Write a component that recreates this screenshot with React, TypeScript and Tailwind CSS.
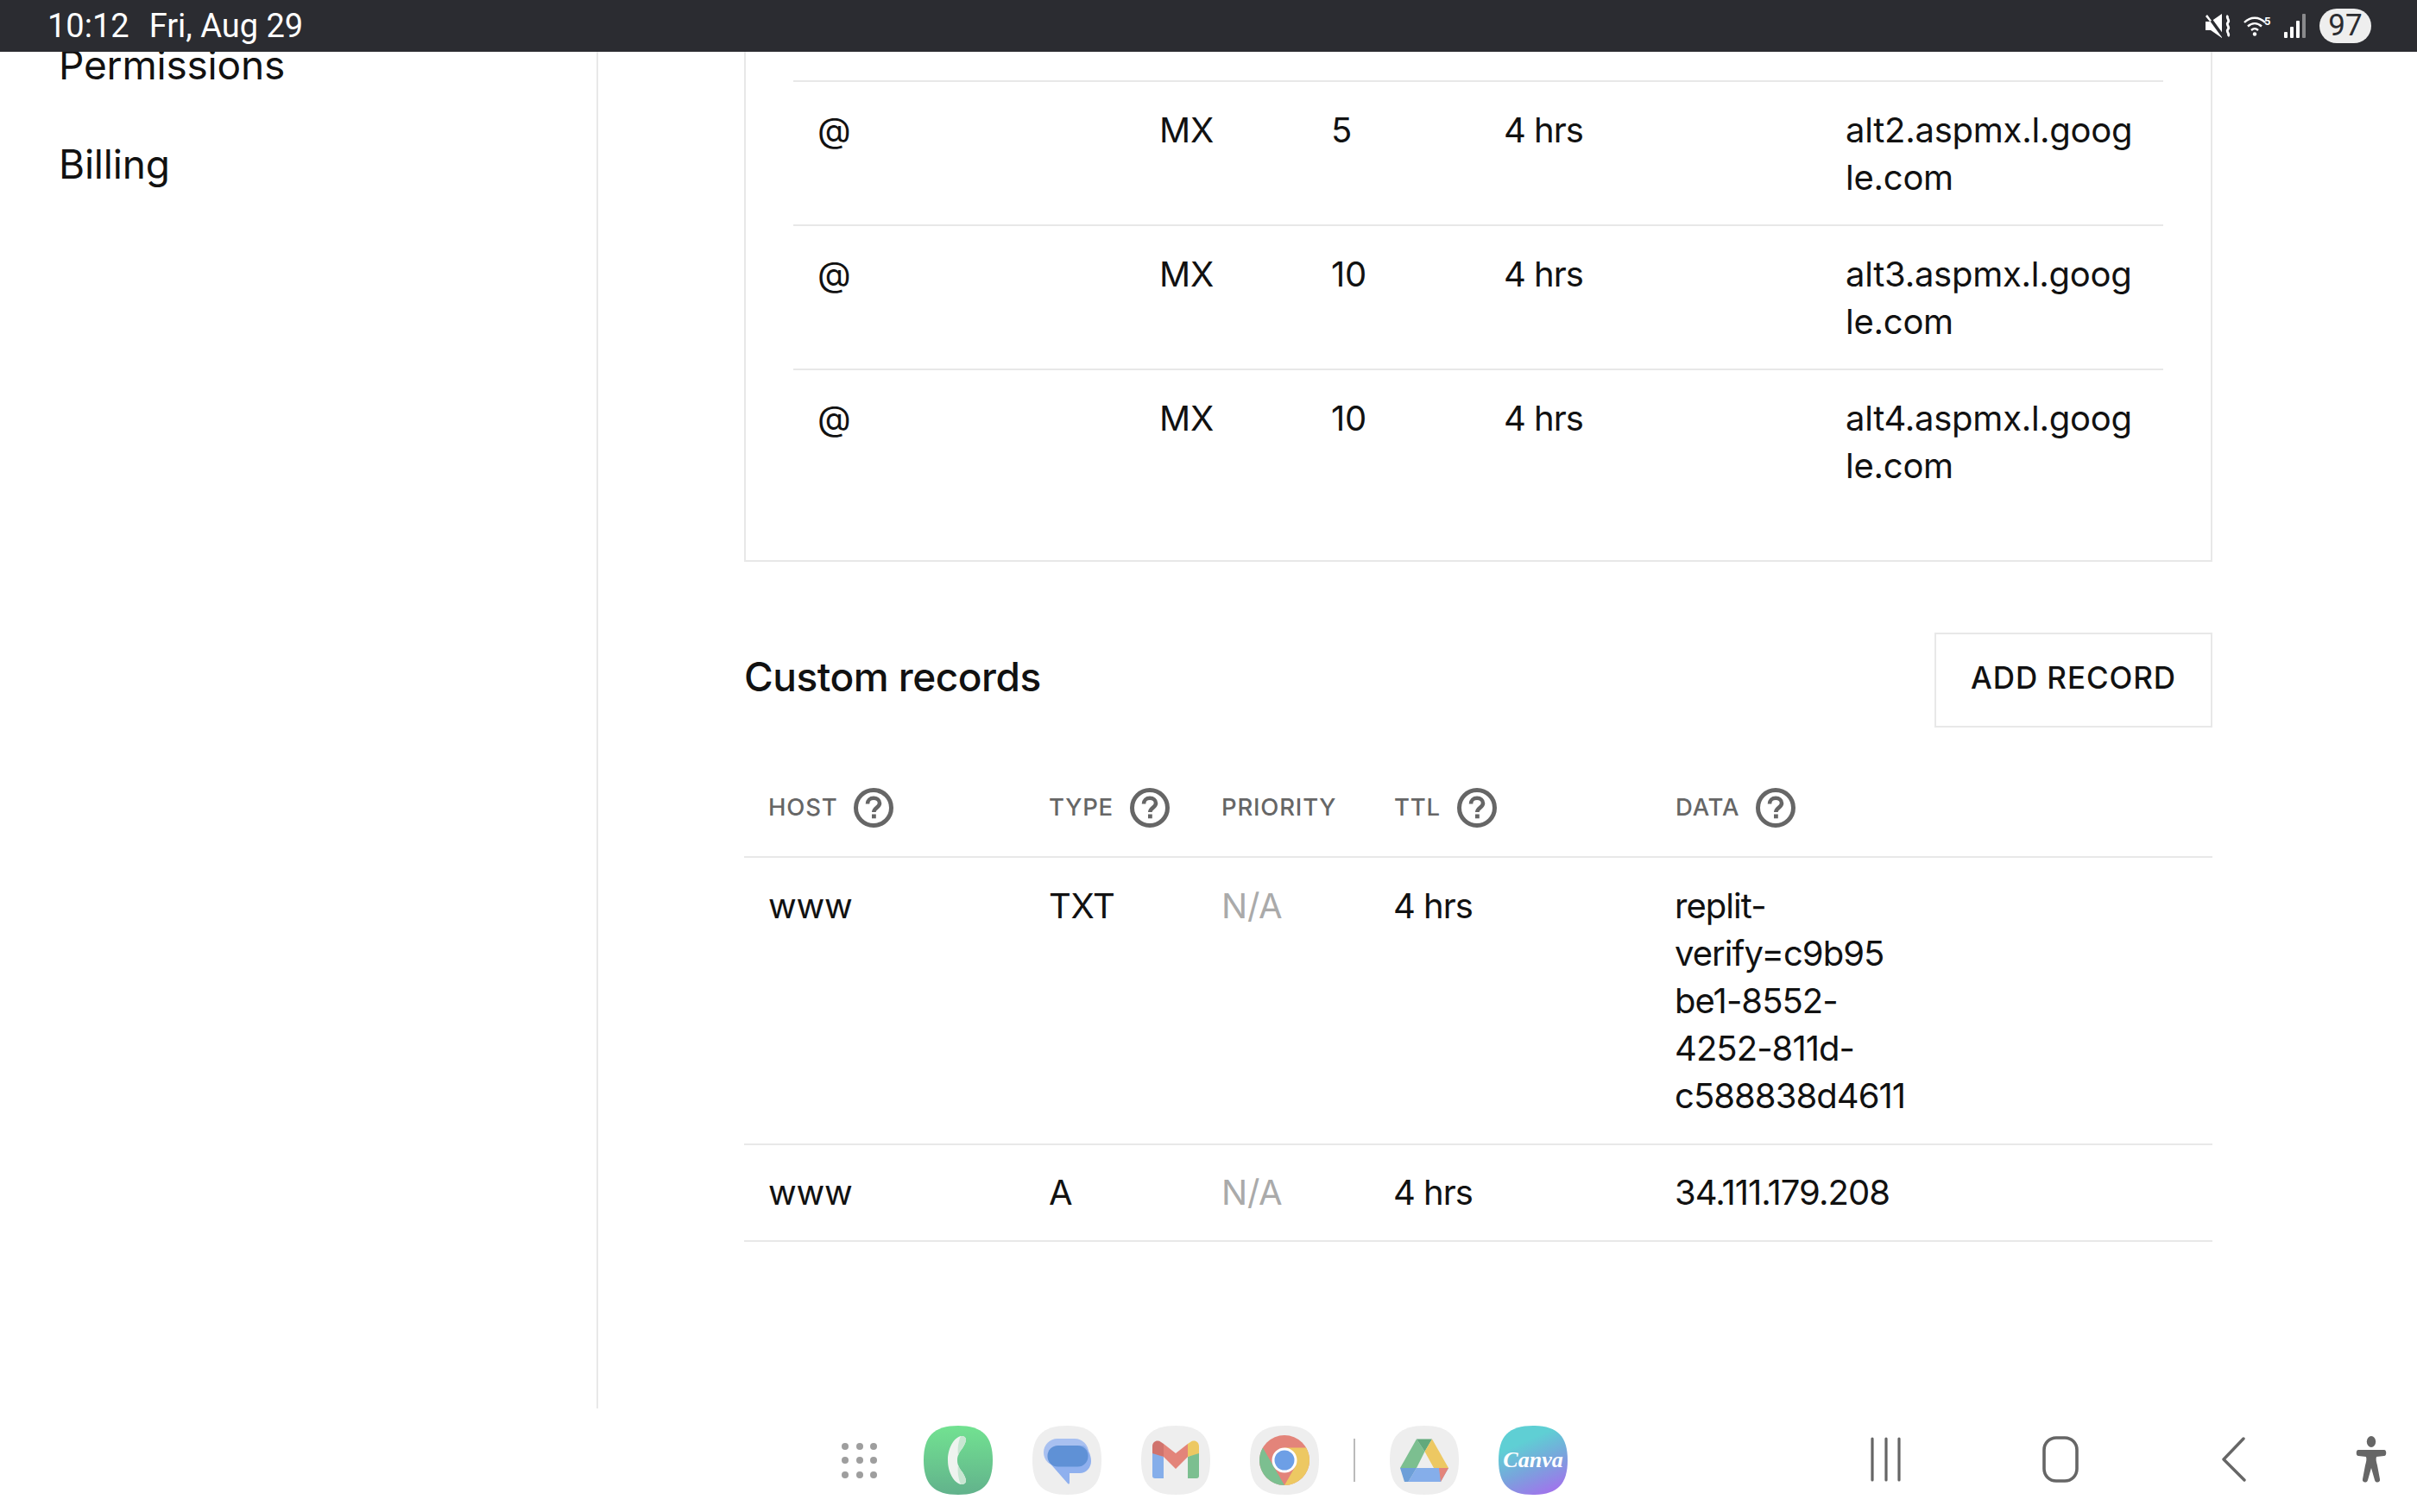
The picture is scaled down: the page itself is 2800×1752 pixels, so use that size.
import React from 'react';

const squircle = 'M40 0C68 0 80 12 80 40C80 68 68 80 40 80C12 80 0 68 0 40C0 12 12 0 40 0Z';

const mxRows = [
  { priority: '5', data: 'alt2.aspmx.l.google.com' },
  { priority: '10', data: 'alt3.aspmx.l.google.com' },
  { priority: '10', data: 'alt4.aspmx.l.google.com' },
];

const customRows = [
  { host: 'www', type: 'TXT', data: 'replit-\nverify=c9b95\nbe1-8552-\n4252-811d-\nc588838d4611' },
  { host: 'www', type: 'A', data: '34.111.179.208' },
];

const HelpIcon = () => (
  <svg width="46" height="46" viewBox="0 0 46 46" fill="none" className="shrink-0">
    <circle cx="23" cy="23" r="20.5" stroke="#666666" strokeWidth="5" />
    <path d="M16 18.500c0-4 3-6.700 7.100-6.700 3.900 0 6.900 2.400 6.900 5.900 0 5-6.700 5.300-6.700 10.300" stroke="#666666" strokeWidth="4.600" />
    <rect x="21" y="30.500" width="4.800" height="4.800" fill="#666666" />
  </svg>
);

const HeaderCell = ({ label, help = true }: { label: string; help?: boolean }) => (
  <div className="flex items-center gap-[19px] pl-[28px]">
    <span className="text-[27.5px] font-medium tracking-[0.8px] text-[#666666]">{label}</span>
    {help && <HelpIcon />}
  </div>
);

const StatusIcons = () => (
  <div className="flex items-center">
    <svg width="30" height="28" viewBox="0 0 30 28" className="mr-[14px]">
      <path d="M0 9h6L19 0v28L6 19H0Z" fill="#ffffff" />
      <path d="M2 1l19 26" stroke="#2b2c31" strokeWidth="3.500" />
      <path d="M0 3l2-2 5 7-2 1Z" fill="#ffffff" />
      <path d="M26 2c-3 3 3 5 0 8s3 5 0 8 3 5 0 8" stroke="#ffffff" strokeWidth="2.800" fill="none" />
    </svg>
    <svg width="33" height="24" viewBox="0 0 33 24" fill="none" className="mr-[14px] overflow-visible">
      <path d="M1 8c7-7 17-7 24 0" stroke="#ffffff" strokeWidth="2.400" />
      <path d="M5 12.500c5-4.500 11-4.500 16 0" stroke="#ffffff" strokeWidth="2.400" />
      <path d="M9 17c3-2.500 5-2.500 8 0" stroke="#ffffff" strokeWidth="2.400" />
      <circle cx="13" cy="21.500" r="2.200" fill="#ffffff" />
      <text x="24" y="11" fontSize="13" fontWeight="700" fill="#ffffff" fontFamily="Roboto, sans-serif">5</text>
    </svg>
    <svg width="26" height="28" viewBox="0 0 26 28" className="mr-[15px]">
      <rect x="0" y="21" width="4" height="7" rx="1" fill="#ffffff" />
      <rect x="7" y="15" width="4" height="13" rx="1" fill="#ffffff" />
      <rect x="14" y="8" width="4" height="20" rx="1" fill="#ffffff" />
      <rect x="21" y="0" width="4" height="28" rx="1" fill="#8a8a8c" />
    </svg>
    <div className="flex h-[40px] w-[60px] items-center justify-center rounded-full bg-[#eeeeee] font-['Roboto',sans-serif] text-[35px] text-[#2b2c31]">
      97
    </div>
  </div>
);

const PhoneIcon = () => (
  <svg width="80" height="80" viewBox="0 0 80 80">
    <defs>
      <linearGradient id="phoneBg" x1="0" y1="0" x2="0" y2="1">
        <stop offset="0" stopColor="#72e291" />
        <stop offset="1" stopColor="#62b28c" />
      </linearGradient>
    </defs>
    <path d={squircle} fill="url(#phoneBg)" />
    <path d="M43 12c3-.5 6 1 6 4 0 3-2 7-4 10-3 4-6 8-6 14s3 10 6 14c2 3 4 7 4 10 0 3-3 4.500-6 4-8-2-15-14-15-28s7-26 15-28Z" fill="#eef3ef" />
    <path d="M43 12c3-.5 6 1 6 4 0 3-2 7-4 10-2 2.600-4 5.200-5 8.500-1-7 0-16 3-22.500ZM40 45.500c1 3.300 3 5.900 5 8.500 2 3 4 7 4 10 0 3-3 4.500-6 4-3-6.500-4-15.500-3-22.500Z" fill="#c8e6d2" />
  </svg>
);

const MessagesIcon = () => (
  <svg width="80" height="80" viewBox="0 0 80 80">
    <path d={squircle} fill="#eeeeee" />
    <rect x="13" y="15" width="52" height="32" rx="16" fill="#a8c0f0" />
    <path d="M19 42 41 67c1 1 2 .5 2-1V55h12c7 0 13-6 13-14s-4-14-8-18H30Z" fill="#8fb0ee" />
    <rect x="17.500" y="23" width="47" height="24.500" rx="12" fill="#5f91d6" />
  </svg>
);

const GmailIcon = () => (
  <svg width="80" height="80" viewBox="0 0 80 80">
    <path d={squircle} fill="#eeeeee" />
    <path d="M13 30v28c0 2 1 3 3 3h10V36Z" fill="#85aeea" />
    <path d="M54 36v25h10c2 0 3-1 3-3V30Z" fill="#7cbf90" />
    <path d="M13 32v-8c0-6 6-8 10-5l3 2v15Z" fill="#d0736d" />
    <path d="M67 32v-8c0-6-6-8-10-5l-3 2v15Z" fill="#edc862" />
    <path d="M26 21l14 11 14-11v15L40 50 26 36Z" fill="#e3847a" />
  </svg>
);

const ChromeIcon = () => (
  <svg width="80" height="80" viewBox="0 0 80 80">
    <path d={squircle} fill="#eeeeee" />
    <circle cx="40" cy="40" r="29" fill="#e3847a" />
    <path d="M14.900 25.500 27.500 47.200 40 69c-16 0-29-13-29-29 0-5 1.400-10.200 3.900-14.500Z" fill="#7cbf90" />
    <path d="M40 69c16 0 29-13 29-29 0-5.100-1.300-10-3.800-14.500H40l12.500 21.700Z" fill="#edc862" />
    <circle cx="40" cy="40" r="14.500" fill="#ffffff" />
    <circle cx="40" cy="40" r="11.500" fill="#6d9fe6" />
  </svg>
);

const DriveIcon = () => (
  <svg width="80" height="80" viewBox="0 0 80 80">
    <path d={squircle} fill="#eeeeee" />
    <polygon points="31,15.500 40.500,30 31,49 12,49" fill="#7cbf90" />
    <polygon points="31,15.500 49,15.500 40.500,30" fill="#62a97c" />
    <polygon points="49,15.500 68,49 51,49 40.500,30" fill="#edc862" />
    <polygon points="31,49 68,49 59,65 21.500,65" fill="#85aeea" />
    <polygon points="12,49 31,49 21.500,65 17,65" fill="#6d9fd8" />
    <polygon points="57,49 68,49 59,65" fill="#e3847a" />
  </svg>
);

const CanvaIcon = () => (
  <svg width="80" height="80" viewBox="0 0 80 80">
    <defs>
      <linearGradient id="canvaBg" x1="0.300" y1="0.100" x2="0.700" y2="1">
        <stop offset="0.150" stopColor="#5fcfd4" />
        <stop offset="0.550" stopColor="#78a5dc" />
        <stop offset="1" stopColor="#a173ec" />
      </linearGradient>
    </defs>
    <path d={squircle} fill="url(#canvaBg)" />
    <text x="40" y="48" textAnchor="middle" fontSize="26" fontStyle="italic" fontWeight="700" fontFamily="'Liberation Serif', serif" fill="#ffffff">
      Canva
    </text>
  </svg>
);

const NavIcons = () => (
  <div className="flex items-center">
    <svg width="36" height="52" viewBox="0 0 36 52" className="mr-[163px]" fill="none" stroke="#666666" strokeWidth="3.200" strokeLinecap="round">
      <path d="M2 2v48M18 2v48M33 2v48" />
    </svg>
    <svg width="42" height="54" viewBox="0 0 42 54" className="mr-[166px]" fill="none">
      <rect x="2" y="2" width="38" height="50" rx="14" stroke="#666666" strokeWidth="3.600" />
    </svg>
    <svg width="28" height="54" viewBox="0 0 28 54" className="mr-[127px]" fill="none" stroke="#666666" strokeWidth="3.400" strokeLinecap="round" strokeLinejoin="round">
      <path d="M25 3 2 27l24 24" />
    </svg>
    <svg width="36" height="56" viewBox="0 0 36 56" fill="#666666">
      <ellipse cx="18" cy="7.500" rx="5.200" ry="6.500" />
      <path d="M3 17h30c3 0 3 7 0 7l-9 1c-1 3 0 6 1 10l3 16c1 4-5 5-6 1l-4-14-4 14c-1 4-7 3-6-1l3-16c1-4 2-7 1-10l-9-1c-3 0-3-7 0-7Z" />
    </svg>
  </div>
);

export default function App() {
  return (
    <div className="flex h-[1752px] w-[2800px] flex-col overflow-hidden bg-white font-['Inter',sans-serif] text-[#111111]">
      {/* Status bar */}
      <div className="z-10 flex h-[60px] shrink-0 items-center justify-between bg-[#2b2c31] pl-[55px] pr-[53px] font-['Roboto',sans-serif] text-[38px] text-white">
        <div className="flex gap-[23px]">
          <span>10:12</span>
          <span>Fri, Aug 29</span>
        </div>
        <StatusIcons />
      </div>

      <div className="flex min-h-0 flex-1">
        {/* Sidebar */}
        <aside className="w-[693px] shrink-0 border-r-2 border-[#e8e8e8] pl-[68px]">
          <div className="-mt-[12px] flex flex-col gap-[60px] text-[46px] leading-[55px] tracking-[-0.2px]">
            <span>Permissions</span>
            <span>Billing</span>
          </div>
        </aside>

        {/* Main content */}
        <main className="w-[1701px] shrink-0 pl-[169px]">
          <div className="w-[1701px] border-x-2 border-b-2 border-[#e8e8e8] px-[55px] pt-[33px] pb-[55px]">
            {mxRows.map((row, i) => (
              <div
                key={i}
                className="grid grid-cols-[396px_200px_200px_395px_396px] border-t-2 border-[#e8e8e8] py-[27.5px] text-[40px] leading-[55px] tracking-[-0.25px]"
              >
                <div className="pl-[28px]">@</div>
                <div className="pl-[28px]">MX</div>
                <div className="pl-[27px]">{row.priority}</div>
                <div className="pl-[27px] tracking-[-1px]">4 hrs</div>
                <div className="px-[28px] break-words">{row.data}</div>
              </div>
            ))}
          </div>

          <div className="mt-[82px] flex w-[1701px] items-center justify-between">
            <h2 className="pb-[8px] text-[46px] font-medium tracking-[-0.5px]">Custom records</h2>
            <button className="flex h-[110px] w-[322px] items-center justify-center border-2 border-[#e8e8e8] pb-[6px] text-[35px] font-medium tracking-[0.9px]">
              ADD RECORD
            </button>
          </div>

          <div className="mt-[31px] w-[1701px]">
            <div className="grid h-[120px] grid-cols-[325px_200px_200px_326px_650px] items-center border-b-2 border-[#e8e8e8] pt-[6px]">
              <HeaderCell label="HOST" />
              <HeaderCell label="TYPE" />
              <HeaderCell label="PRIORITY" help={false} />
              <HeaderCell label="TTL" />
              <HeaderCell label="DATA" />
            </div>
            {customRows.map((row, i) => (
              <div
                key={i}
                className="grid grid-cols-[325px_200px_200px_326px_650px] border-b-2 border-[#e8e8e8] py-[27.75px] text-[40px] leading-[55px] tracking-[-0.25px]"
              >
                <div className="pl-[28px]">{row.host}</div>
                <div className="pl-[28px]">{row.type}</div>
                <div className="pl-[28px] text-[#aaaaaa]">N/A</div>
                <div className="pl-[27px] tracking-[-1px]">4 hrs</div>
                <div className="pl-[27px] tracking-[-0.95px] whitespace-pre-line">{row.data}</div>
              </div>
            ))}
          </div>
        </main>
      </div>

      {/* Navigation bar */}
      <div className="flex h-[120px] shrink-0 items-start justify-between bg-white pt-[20px] pr-[35px] pl-[975px]">
        <div className="flex items-center gap-[46px]">
          <div className="mr-[8px] grid grid-cols-3 gap-[8.500px]">
            {Array.from({ length: 9 }).map((_, i) => (
              <span key={i} className="h-[8px] w-[8px] rounded-full bg-[#9e9e9e]" />
            ))}
          </div>
          <PhoneIcon />
          <MessagesIcon />
          <GmailIcon />
          <ChromeIcon />
          <div className="-mx-[6px] h-[50px] w-[2px] bg-[#bbbbbb]" />
          <DriveIcon />
          <CanvaIcon />
        </div>
        <div className="pt-[11px]">
          <NavIcons />
        </div>
      </div>
    </div>
  );
}
